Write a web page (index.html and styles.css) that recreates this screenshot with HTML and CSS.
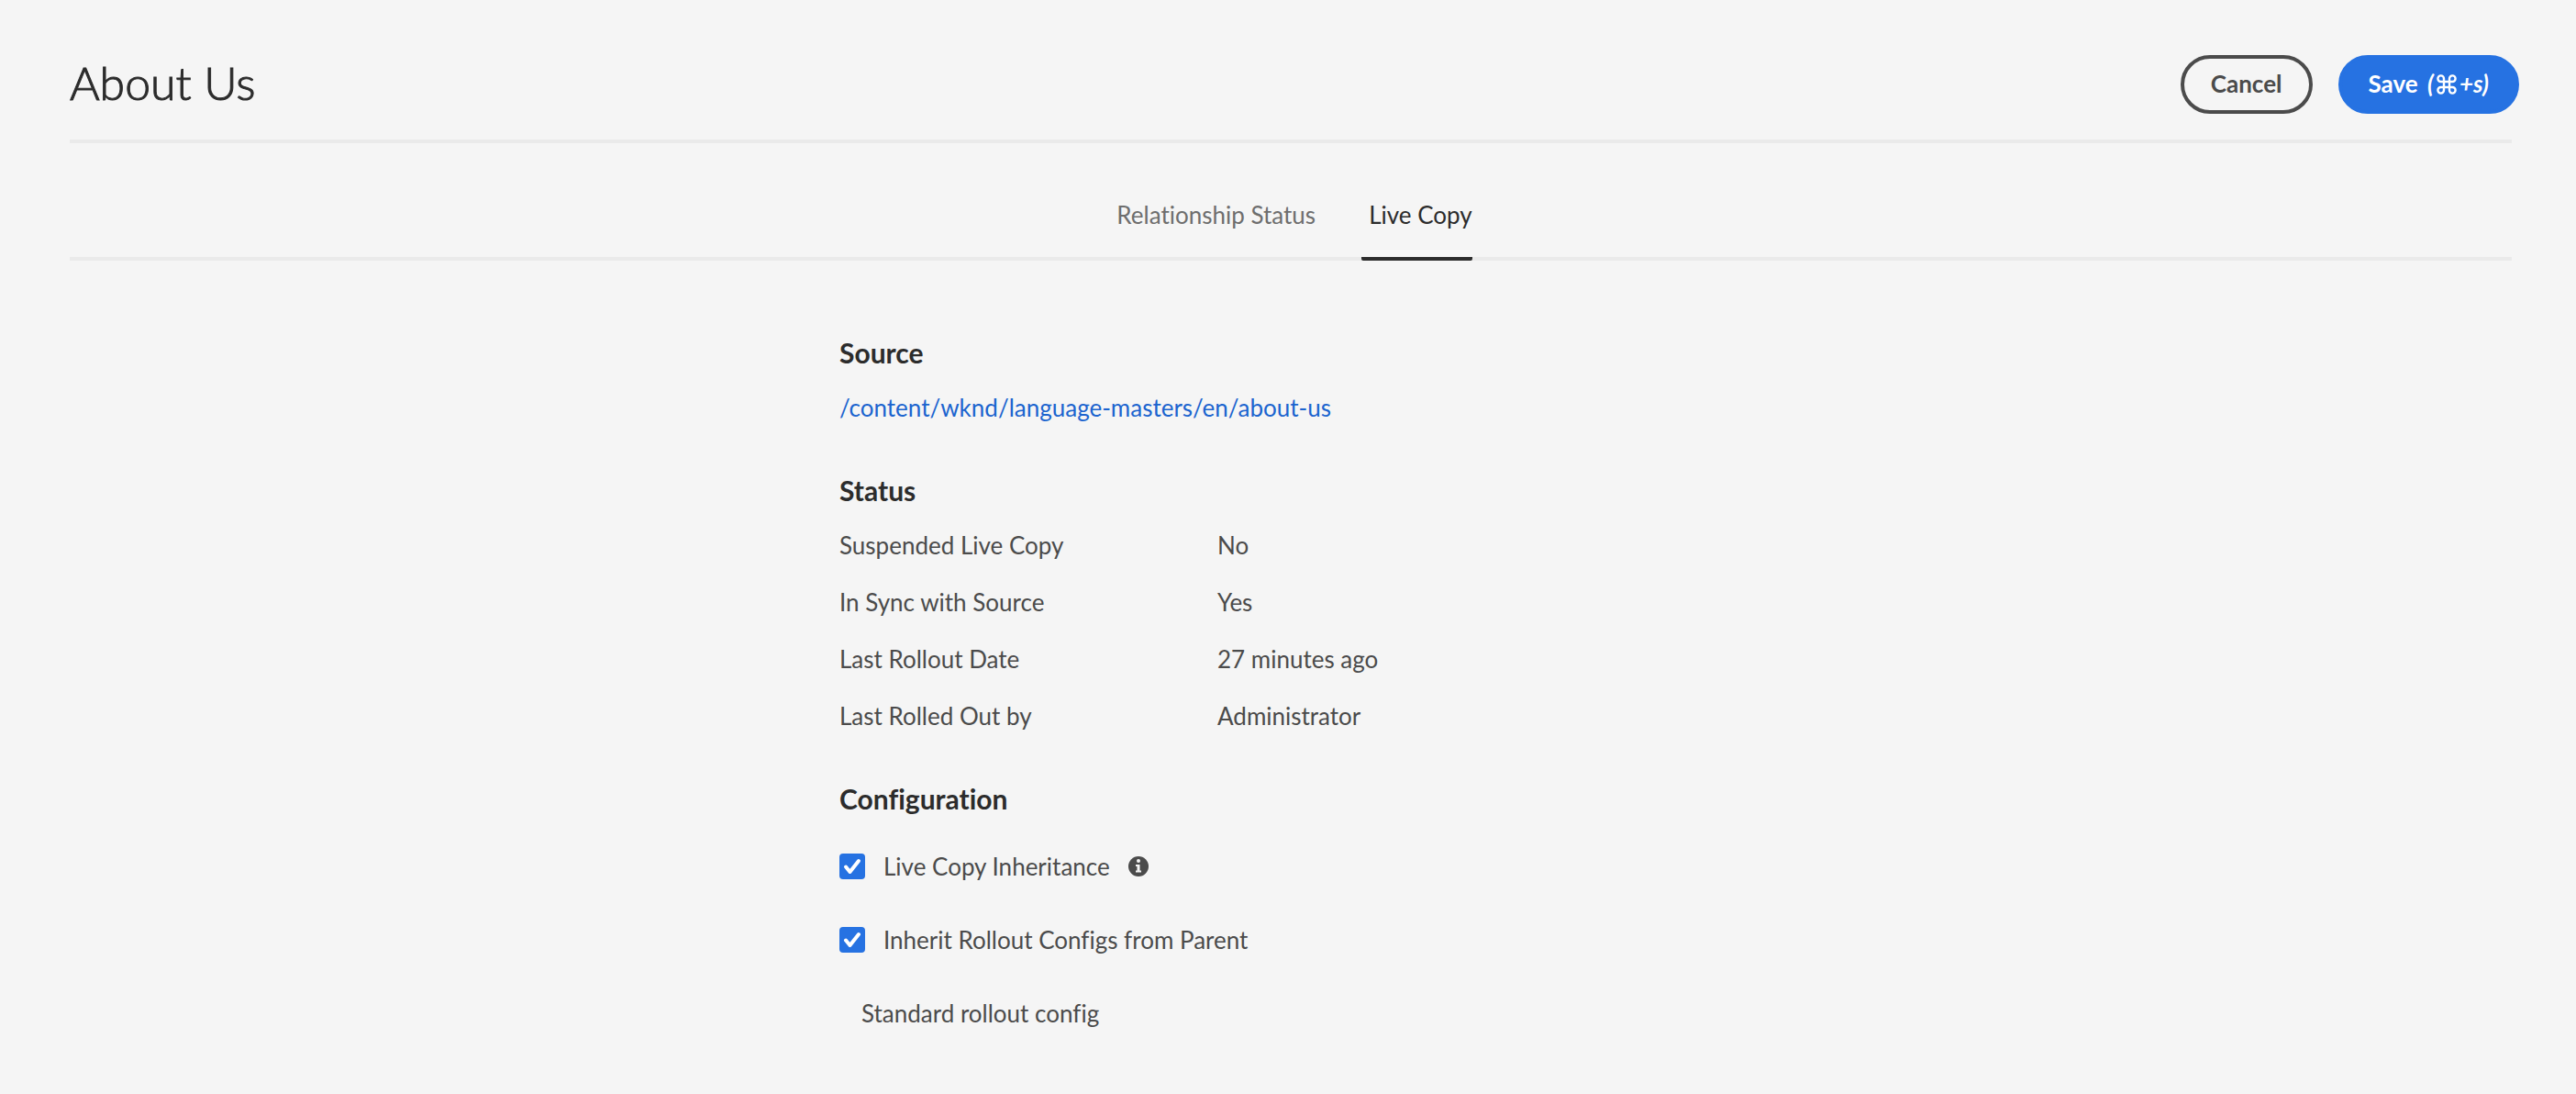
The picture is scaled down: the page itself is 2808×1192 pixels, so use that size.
FILE: index.html
```html
<!DOCTYPE html>
<html lang="en">
<head>
<meta charset="utf-8">
<meta name="viewport" content="width=device-width, initial-scale=1">
<title>About Us</title>
<link rel="stylesheet" href="styles.css">
</head>
<body>
<form class="page">
  <header class="header">
    <h1 class="title">About Us</h1>
    <div class="actions">
      <button type="button" class="button">Cancel</button>
      <button type="submit" class="button button-primary">Save <em class="shortcut">(<svg class="command" viewBox="0 0 22 22" aria-hidden="true"><path d="M8 8V4.700A3.300 3.300 0 1 0 4.700 8H17.300A3.300 3.300 0 1 0 14 4.700V17.300A3.300 3.300 0 1 0 17.300 14H4.700A3.300 3.300 0 1 0 8 17.300Z"/></svg>+s)</em></button>
    </div>
  </header>

  <nav class="tabs" aria-label="Live copy views">
    <a class="tab" href="#relationship">Relationship Status</a>
    <a class="tab tab-selected" href="#livecopy" aria-current="page">Live Copy</a>
  </nav>

  <main class="content">
    <section class="section">
      <h2 class="heading">Source</h2>
      <a class="source-link" href="#source">/content/wknd/language-masters/en/about-us</a>
    </section>

    <section class="section">
      <h2 class="heading">Status</h2>
      <table class="status">
        <tbody>
          <tr><th scope="row">Suspended Live Copy</th><td>No</td></tr>
          <tr><th scope="row">In Sync with Source</th><td>Yes</td></tr>
          <tr><th scope="row">Last Rollout Date</th><td>27 minutes ago</td></tr>
          <tr><th scope="row">Last Rolled Out by</th><td>Administrator</td></tr>
        </tbody>
      </table>
    </section>

    <section class="section">
      <h2 class="heading heading-options">Configuration</h2>
      <div class="option">
        <input class="checkbox" type="checkbox" id="inheritance" checked>
        <label for="inheritance">Live Copy Inheritance</label>
        <svg class="info" viewBox="0 0 22 22" role="img" aria-label="Information"><circle cx="11" cy="11" r="11" fill="#4b4b4b"/><circle cx="11" cy="5" r="2" fill="#f5f5f5"/><path d="M8 9h4.500v6.500H14V17.500H8v-2h1.500V11H8z" fill="#f5f5f5"/></svg>
      </div>
      <div class="option">
        <input class="checkbox" type="checkbox" id="rollout" checked>
        <label for="rollout">Inherit Rollout Configs from Parent</label>
      </div>
      <p class="config-name">Standard rollout config</p>
    </section>
  </main>
</form>
</body>
</html>
```
FILE: styles.css
```css
* {
  box-sizing: border-box;
}

body {
  margin: 0;
  background: #f5f5f5;
  color: #4b4b4b;
  font: 26px/40px Lato, "Noto Sans", sans-serif;
  font-variant-ligatures: none;
}

.page {
  padding: 32px 70px 0 76px;
}

.header {
  display: flex;
  align-items: center;
  justify-content: space-between;
  height: 124px;
  margin-right: -8px;
  padding-bottom: 4px;
  background: linear-gradient(#eaeaea, #eaeaea) left bottom / calc(100% - 8px) 4px no-repeat;
}

.title {
  margin: 0;
  padding-bottom: 4px;
  color: #2c2c2c;
  font-size: 50px;
  font-weight: 300;
  line-height: 60px;
  -webkit-text-stroke: 1px #2c2c2c;
}

.actions {
  display: flex;
  gap: 28px;
}

.button {
  height: 64px;
  padding: 0 29px 2px;
  border: 4px solid #4b4b4b;
  border-radius: 32px;
  background: transparent;
  color: #4b4b4b;
  font: inherit;
  font-weight: 700;
}

.button-primary {
  border-color: #2672e2;
  background: #2672e2;
  color: #fff;
}

.shortcut {
  margin-left: 4px;
}

.command {
  width: 22px;
  height: 22px;
  margin: 0 3px;
  vertical-align: -2px;
  fill: none;
  stroke: #fff;
  stroke-width: 2.4;
}

.tabs {
  display: flex;
  justify-content: center;
  gap: 50px;
  height: 128px;
  padding-top: 58px;
  border-bottom: 4px solid #eaeaea;
}

.tab {
  height: 70px;
  padding-left: 8px;
  color: #6e6e6e;
  text-decoration: none;
}

.tab-selected {
  border-bottom: 4px solid #2c2c2c;
  border-radius: 2px;
  color: #2c2c2c;
}

.content {
  max-width: 984px;
  margin: 80px auto 0;
}

.section {
  margin-bottom: 50px;
}

.section:last-child {
  margin-bottom: 0;
}

.heading {
  margin: 0 0 20px;
  color: #2c2c2c;
  font-size: 30px;
  font-weight: 700;
  line-height: 40px;
}

.heading-options {
  margin-bottom: 14px;
}

.source-link {
  display: block;
  color: #1b64cf;
  text-decoration: none;
}

.status {
  width: 100%;
  border-collapse: collapse;
}

.status th,
.status td {
  padding: 0 0 22px;
  font-weight: 400;
  text-align: left;
}

.status tr:last-child > * {
  padding-bottom: 0;
}

.status th {
  width: 412px;
}

.option {
  display: flex;
  align-items: center;
  height: 80px;
}

.checkbox {
  appearance: none;
  width: 28px;
  height: 28px;
  margin: 0 20px 0 0;
  border-radius: 4px;
  background: #2672e2 url("data:image/svg+xml,%3Csvg xmlns='http://www.w3.org/2000/svg' viewBox='0 0 28 28'%3E%3Cpath d='M7 14.500L11.500 20L21 8' fill='none' stroke='white' stroke-width='4' stroke-linecap='round' stroke-linejoin='round'/%3E%3C/svg%3E");
}

.info {
  width: 22px;
  height: 22px;
  margin-left: 20px;
}

.config-name {
  margin: 0;
  padding: 20px 24px;
}
```
